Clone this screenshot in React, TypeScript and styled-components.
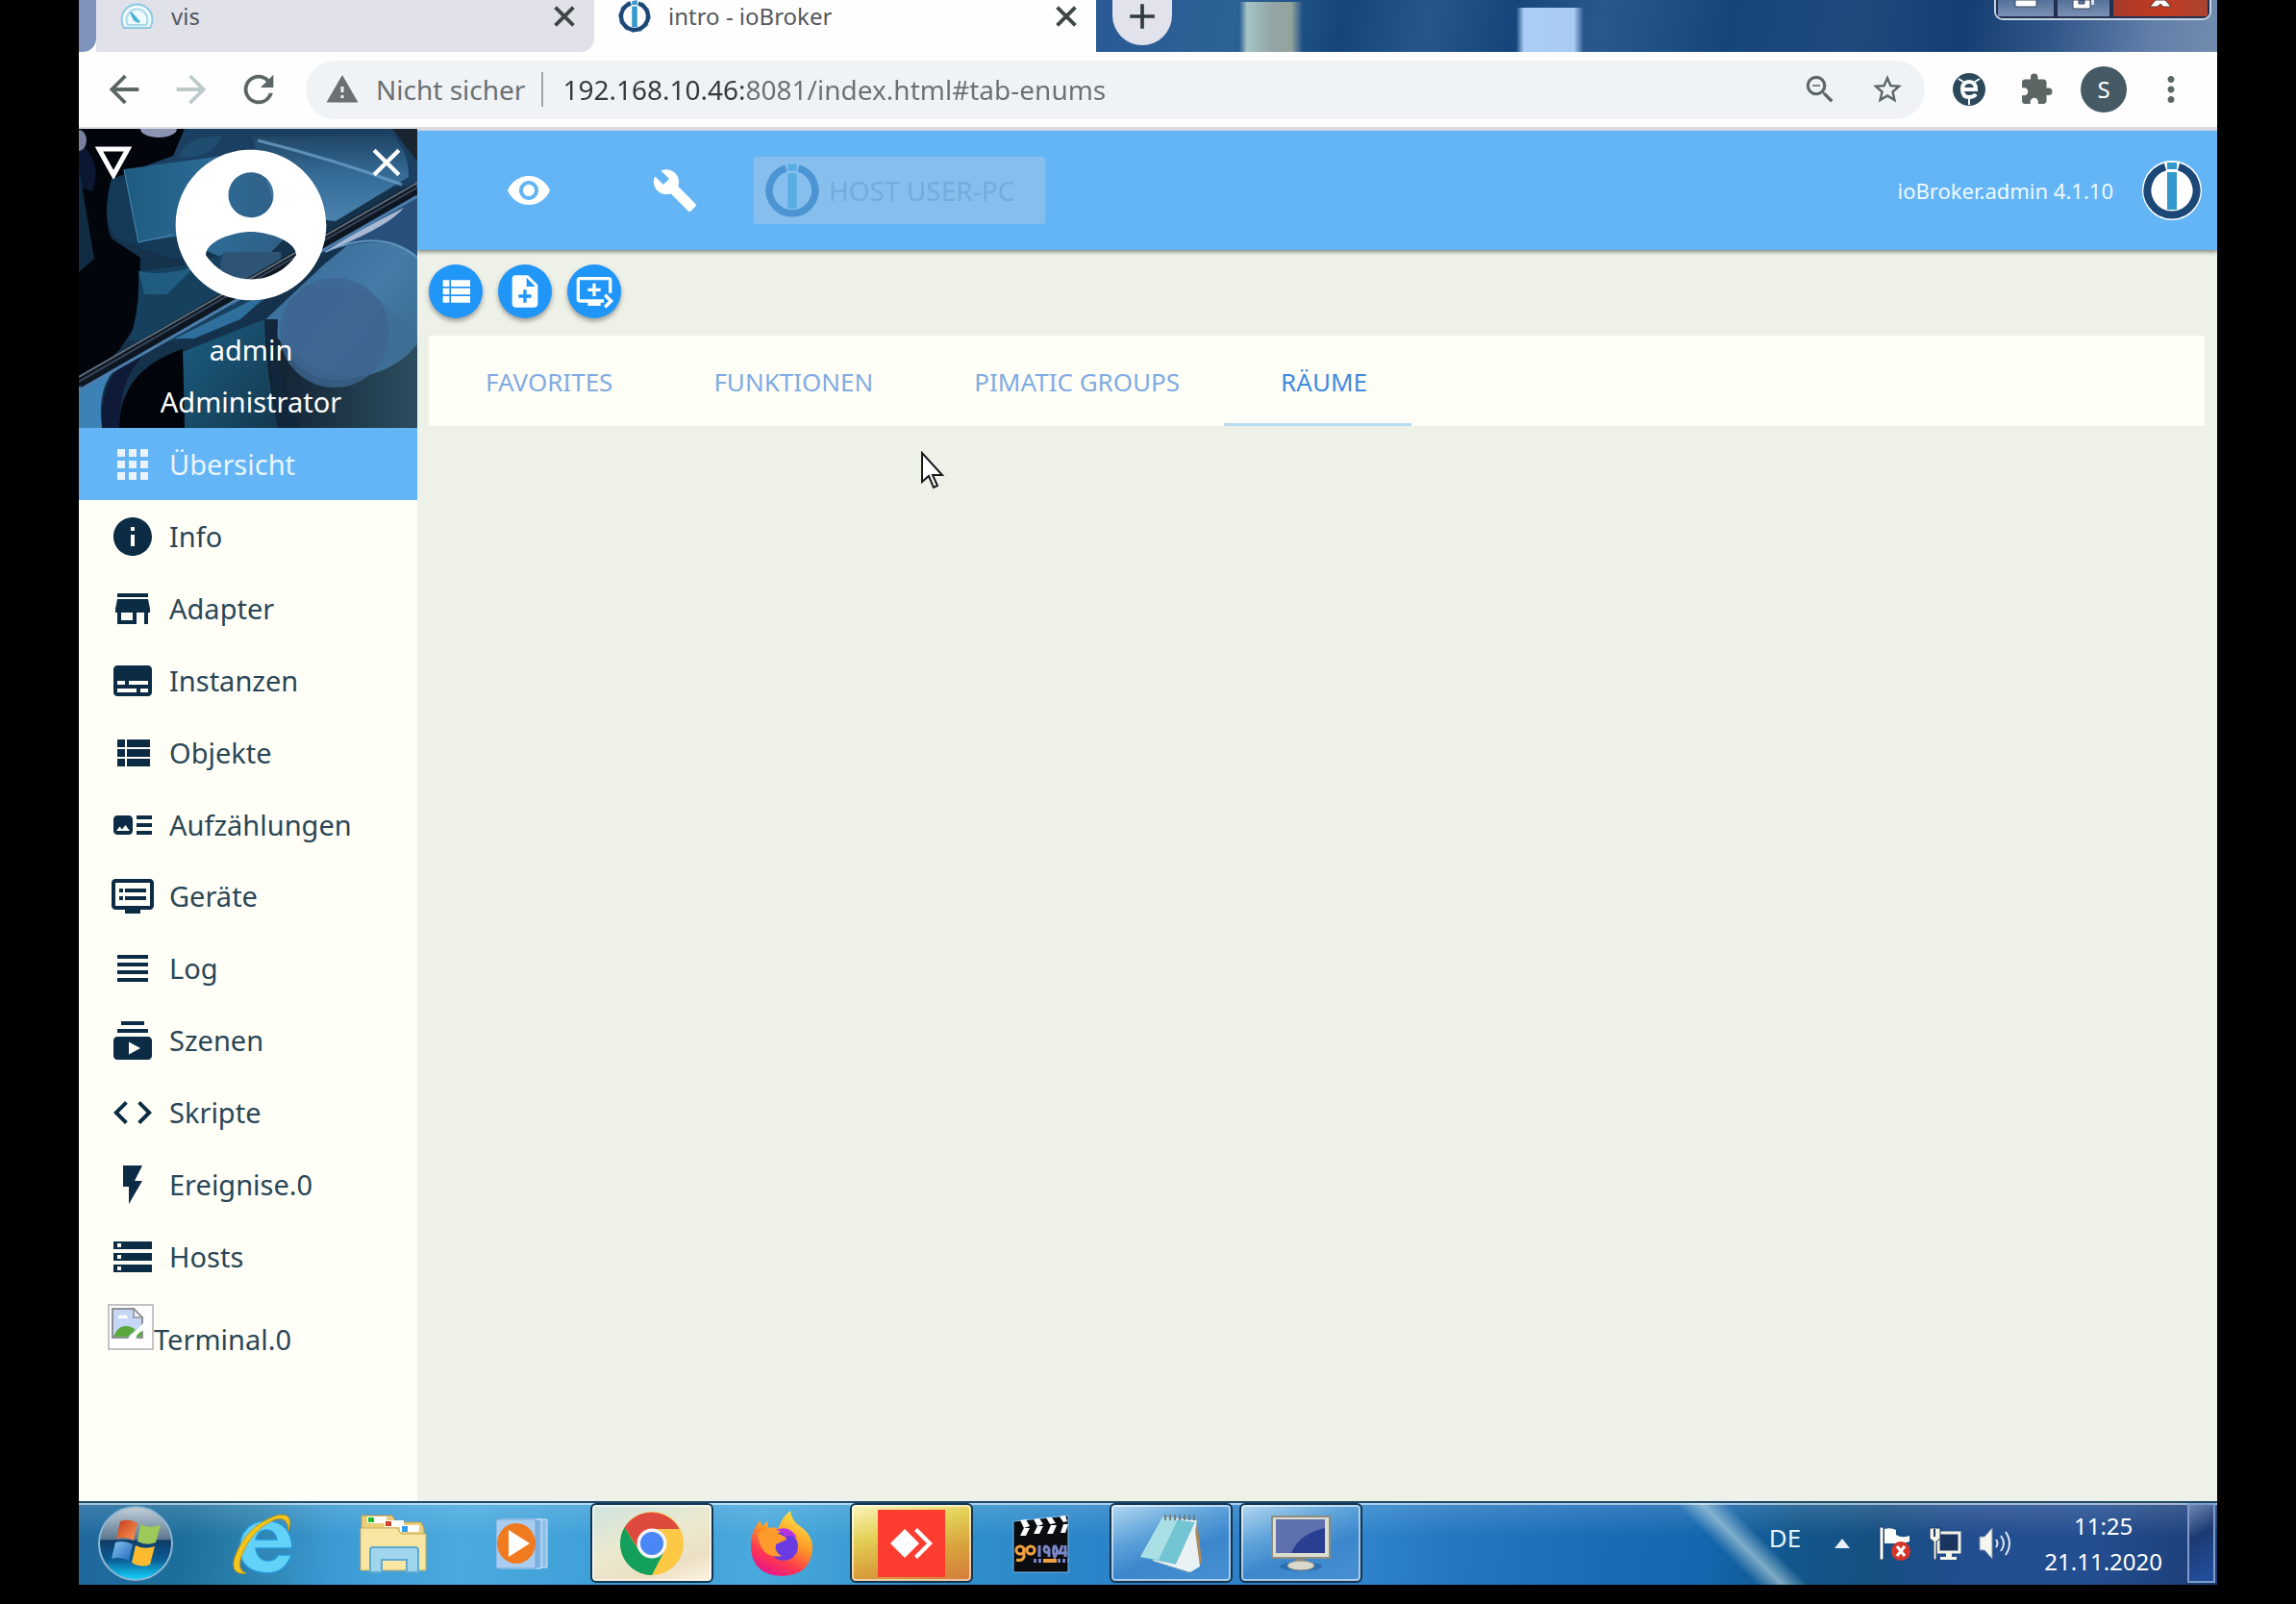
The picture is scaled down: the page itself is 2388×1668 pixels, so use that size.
import React from "react";
import styled, { createGlobalStyle } from "styled-components";
import {
  MdAdd,
  MdApps,
  MdArrowBack,
  MdArrowForward,
  MdArtTrack,
  MdBuild,
  MdCode,
  MdDvr,
  MdExtension,
  MdFlashOn,
  MdInfo,
  MdMoreVert,
  MdNoteAdd,
  MdQueuePlayNext,
  MdRefresh,
  MdStarBorder,
  MdStorage,
  MdSubscriptions,
  MdSubtitles,
  MdViewHeadline,
  MdVisibility,
  MdWarning,
  MdZoomOut,
} from "react-icons/md";

const GlobalStyle = createGlobalStyle`
  * { box-sizing: border-box; }
  body {
    margin: 0;
    background: #000;
    font-family: "Noto Sans", "Open Sans", sans-serif;
  }
  button, input { font: inherit; }
  button {
    margin: 0;
    padding: 0;
    border: 0;
    background: none;
    color: inherit;
    cursor: pointer;
  }
  svg { display: block; flex: none; }
`;

/* ---------- frame ---------- */

const Frame = styled.div`
  display: flex;
  flex-direction: column;
  min-height: 100vh;
  padding: 0 82px 20px;
  background: #000;
`;

const Row = styled.div<{ $gap?: number }>`
  display: flex;
  align-items: center;
  gap: ${(p) => p.$gap ?? 0}px;
`;

const Spacer = styled.div`
  flex: 1;
`;

/* ---------- browser chrome ---------- */

const TabStrip = styled.div`
  display: flex;
  height: 54px;
  overflow: hidden;
  background:
    linear-gradient(90deg, transparent, #a5c4c4 8px, #94a4a4 34px, #93a39c 54px, transparent) 1207px 2px / 66px 52px no-repeat,
    linear-gradient(90deg, transparent, #a9cdf6 8px, #a9cbf3 60px, transparent) 1495px 8px / 70px 46px no-repeat,
    linear-gradient(100deg, #7d93bd 0, #7d93bd 2%, #2a5798 45%, #2c6294 54%, #16457c 59%, #27568c 63%, #16457c 67%,
      #2a588e 71%, #16457c 77%, #1f4a7c 83%, #153e72 88%, #2f5688 92%, #6380aa 97%, #718cad 100%);
`;

const StripEdge = styled.div`
  width: 18px;
  background: #7d93bd;
  border-radius: 0 0 14px 0;
`;

const BrowserTab = styled.div<{ $active?: boolean; $width: number }>`
  display: flex;
  align-items: flex-start;
  gap: 18px;
  width: ${(p) => p.$width}px;
  padding: 0 20px 0 25px;
  border-radius: ${(p) => (p.$active ? "0" : "0 0 14px 0")};
  background: ${(p) => (p.$active ? "#fefefe" : "#e1e1ea")};
  color: #55585c;
  font-size: 24px;
  line-height: 34px;
`;

const TabBacking = styled.div`
  display: flex;
  background: #fefefe;
`;

const TabTitle = styled.span`
  flex: 1;
`;

const TabClose = styled.button`
  height: 34px;
  color: #3f4648;
  display: flex;
  align-items: center;
`;

const TabStripRest = styled.div`
  display: flex;
  align-items: flex-start;
  justify-content: space-between;
  flex: 1;
  padding: 0 6px 0 17px;
`;

const NewTab = styled.button`
  display: flex;
  align-items: flex-end;
  justify-content: center;
  width: 62px;
  height: 47px;
  padding-bottom: 8px;
  border-radius: 0 0 31px 31px;
  background: #e2e2ec;
  color: #2f3b3c;
`;

const WindowButtons = styled.div`
  display: flex;
  height: 21px;
  border: 2px solid #c9d4e6;
  border-top: 0;
  border-radius: 0 0 9px 9px;
  overflow: hidden;
`;

const WindowButton = styled.button<{ $width: number; $close?: boolean }>`
  display: flex;
  justify-content: center;
  width: ${(p) => p.$width}px;
  border: 2px solid #20304e;
  border-top: 0;
  background: ${(p) =>
    p.$close ? "linear-gradient(90deg, #a53a2c, #c33a20 50%, #a94430)" : "linear-gradient(#54719a, #7b90b3)"};
`;

const Toolbar = styled.div`
  display: flex;
  align-items: center;
  height: 80px;
  padding: 0 24px 0 23px;
  border-bottom: 2px solid #dcdfe6;
  background: #fefefe;
  color: #5c6366;
`;

const ToolButton = styled.button<{ $muted?: boolean }>`
  display: flex;
  align-items: center;
  justify-content: center;
  width: 48px;
  height: 48px;
  color: ${(p) => (p.$muted ? "#bccaca" : "#5c6664")};
`;

const AddressBar = styled.div`
  display: flex;
  align-items: center;
  flex: 1;
  height: 61px;
  margin: 0 22px 0 25px;
  padding: 0 15px 0 20px;
  border-radius: 31px;
  background: #eff3f5;
  font-size: 28px;
  line-height: 40px;
`;

const Insecure = styled.label`
  display: flex;
  align-items: center;
  gap: 17px;
  padding-right: 17px;
  border-right: 2px solid #9fa5a8;
  line-height: 34px;
  color: #6b7073;
  white-space: nowrap;
`;

const AddressInput = styled.input`
  flex: 1;
  min-width: 0;
  height: 40px;
  margin-left: 20px;
  padding: 0;
  border: 0;
  outline: 0;
  color: #6b7073;
  background: linear-gradient(90deg, #36393c 190px, #6b7073 190px);
  background-clip: text;
  -webkit-background-clip: text;
  -webkit-text-fill-color: transparent;
`;

const Profile = styled.button`
  width: 48px;
  height: 48px;
  border-radius: 50%;
  background: #455a64;
  color: #fff;
  font-size: 24px;
  line-height: 48px;
`;

/* ---------- application ---------- */

const AppBody = styled.div`
  display: flex;
  flex: 1;
`;

const Sidebar = styled.aside`
  width: 352px;
  background: #fffff8;
`;

const Cover = styled.div`
  position: relative;
  display: flex;
  flex-direction: column;
  align-items: center;
  padding: 6px 0 0 6px;
  overflow: hidden;
  background: #0a1e32;
  color: #fff;
  font-size: 29px;
  line-height: 54px;
`;

const CoverArt = styled.svg`
  position: absolute;
  inset: 0;
  width: 100%;
  height: 100%;
`;

const Avatar = styled.svg`
  position: relative;
  width: 188px;
  height: 188px;
  margin-bottom: 9px;
`;

const CoverLine = styled.div`
  position: relative;
`;

const CoverButton = styled.button<{ $side: "left" | "right" }>`
  position: absolute;
  top: 11px;
  ${(p) => p.$side}: ${(p) => (p.$side === "left" ? 12 : 8)}px;
  width: 48px;
  height: 48px;
  display: flex;
  align-items: center;
  justify-content: center;
`;

const NavList = styled.ul`
  display: flex;
  flex-direction: column;
  height: 899px;
  margin: 0;
  padding: 0;
  list-style: none;
`;

const NavItem = styled.li`
  display: flex;
  flex: 1;
`;

const NavLink = styled.a<{ $active?: boolean }>`
  display: flex;
  align-items: center;
  gap: 14px;
  flex: 1;
  padding: 1px 32px 0;
  background: ${(p) => (p.$active ? "#64b5f6" : "none")};
  color: ${(p) => (p.$active ? "#e9f5fe" : "#2a4656")};
  font-size: 29px;
  line-height: 40px;
  text-decoration: none;

  svg {
    color: ${(p) => (p.$active ? "#e9f2fd" : "#0b2c44")};
  }
`;

const ImageLink = styled.a`
  display: flex;
  align-items: baseline;
  padding: 12px 30px;
  color: #2a4656;
  font-size: 29px;
  line-height: 40px;
  text-decoration: none;
`;

const Main = styled.main`
  flex: 1;
  min-width: 0;
  border-top: 2px solid #dcdfe6;
  background: #eef1e8;
`;

const Header = styled.header`
  display: flex;
  align-items: center;
  height: 124px;
  padding: 0 16px 0 92px;
  background: #64b5f6;
  box-shadow: 0 2px 4px rgba(0, 0, 0, 0.45);
  color: #fff;
`;

const HeaderButton = styled.button`
  width: 48px;
  height: 48px;
`;

const HostButton = styled.button`
  display: flex;
  align-items: center;
  gap: 9px;
  height: 70px;
  margin-left: 58px;
  padding: 0 32px 0 11px;
  border-radius: 3px;
  background: #86bfee;
  color: #74acdb;
  font-size: 28px;
  line-height: 40px;
`;

const Version = styled.span`
  color: #eefaff;
  font-size: 22px;
  line-height: 34px;
`;

const Content = styled.div`
  padding: 15px 13px 0 12px;
`;

const RoundButton = styled.button`
  display: flex;
  align-items: center;
  justify-content: center;
  width: 56px;
  height: 56px;
  border-radius: 50%;
  background: #2196f9;
  box-shadow: 0 3px 5px rgba(0, 0, 0, 0.35);
  color: #fff;
`;

const TabPanel = styled.div`
  display: flex;
  height: 94px;
  margin-top: 18px;
  background: #fffff8;
`;

const EnumTab = styled.button<{ $active?: boolean }>`
  padding: 4px 46px 0 59px;
  border-bottom: 3px solid ${(p) => (p.$active ? "#b5dcf0" : "transparent")};
  color: ${(p) => (p.$active ? "#3f8ae0" : "#7fabe2")};
  font-size: 26px;
  line-height: 40px;
`;

const Cursor = styled.svg`
  position: absolute;
  left: 957px;
  top: 469px;
`;

/* ---------- taskbar ---------- */

const Taskbar = styled.footer`
  display: flex;
  align-items: center;
  height: 87px;
  padding: 0 2px 2px 19px;
  border-top: 2px solid #1d4a68;
  box-shadow: inset 0 2px 0 rgba(255, 255, 255, 0.55);
  background:
    linear-gradient(45deg, transparent 38%, rgba(170, 205, 220, 0.7) 50%, transparent 62%) right 424px top 0 / 140px
      86px no-repeat,
    linear-gradient(rgba(255, 255, 255, 0.14), transparent 40%),
    linear-gradient(95deg, #20689f 0, #1d6f9b 5%, #2c80ac 8%, #3b9ad4 12%, #4aaade 18%, #3c9dd6 26%, #4aa9dd 32%,
      #2f92cb 40%, #2a80c8 50%, #2f84cc 60%, #2577c0 64%, #1a6cb6 71%, #1466ae 76%, #11578c 80%, #164f82 84%,
      #224d8f 88%, #234e90 94%, #1b3d76 100%);
  color: #fff;
`;

const StartButton = styled.button`
  width: 80px;
  height: 80px;
  margin-right: 28px;
`;

const TaskButton = styled.button<{ $look?: "open" | "front" | "alert" }>`
  display: flex;
  align-items: center;
  justify-content: center;
  width: 128px;
  height: 83px;
  border: ${(p) => (p.$look ? "2px solid #12344f" : "0")};
  border-radius: 6px;
  box-shadow: ${(p) => (p.$look ? "inset 0 0 0 2px rgba(255, 255, 255, 0.55)" : "none")};
  background: ${(p) =>
    p.$look === "front"
      ? "linear-gradient(160deg, #cfe3e0, #ebe9cf 45%, #ece0c4 75%, #fdf4e4)"
      : p.$look === "alert"
        ? "linear-gradient(165deg, #fdf6c0, #e3d057 35%, #d9a23c 65%, #d47a3c)"
        : p.$look === "open"
          ? "linear-gradient(160deg, #b4d8f0, #5fa3da 35%, #3c87cc 60%, #4790d2)"
          : "none"};
`;

const Language = styled.button`
  color: #e4f1fa;
  font-size: 26px;
  line-height: 34px;
  padding-bottom: 12px;
`;

const Tray = styled.div`
  display: flex;
  align-items: center;
  gap: 18px;
  margin: 0 34px 0 30px;
`;

const Clock = styled.button`
  margin-right: 26px;
  font-size: 24px;
  line-height: 37px;
  text-align: center;
`;

const ShowDesktop = styled.button`
  width: 29px;
  height: 83px;
  border: 2px solid #7f9cc8;
  background: linear-gradient(150deg, #6f86b4, #1b3a72 40%, #2350a0);
`;

/* ---------- drawings ---------- */

function BrokerLogo({
  size,
  disc,
  teeth,
  ring = "#1c4877",
  bar = "#3399cc",
}: {
  size: number;
  disc?: string;
  teeth?: boolean;
  ring?: string;
  bar?: string;
}) {
  return (
    <svg width={size} height={size} viewBox="0 0 62 62" aria-hidden="true">
      {teeth && <circle cx="31" cy="31" r="29" fill="none" stroke="#8fa9c6" strokeWidth="4" strokeDasharray="6 9" />}
      {disc && <circle cx="31" cy="31" r="31" fill={disc} />}
      <path d="M24 6.500A25.500 25.500 0 1 0 38 6.500" fill="none" stroke={ring} strokeWidth="8" />
      <path d="M26 2h10v7H26zM26 12h10v39H26z" fill={bar} />
    </svg>
  );
}

function CloseIcon({ size, weight }: { size: number; weight: number }) {
  return (
    <svg width={size} height={size} viewBox="0 0 28 28" aria-hidden="true">
      <path d="M2 2l24 24M26 2L2 26" fill="none" stroke="currentColor" strokeWidth={weight} />
    </svg>
  );
}

function GaugeIcon() {
  return (
    <svg width="35" height="32" viewBox="0 0 35 32" aria-hidden="true">
      <path d="M4 29a16 16 0 1 1 27 0z" fill="#eef9fb" stroke="#8cc9e2" strokeWidth="2" />
      <path d="M8 26a11 11 0 1 1 19 0z" fill="none" stroke="#a8d8e8" strokeWidth="2" />
      <path d="M11 13l9 10-5-2z" fill="#4eb0dc" stroke="#4eb0dc" strokeWidth="2" />
    </svg>
  );
}

function StoreIcon({ size }: { size: number }) {
  return (
    <svg width={size} height={size} viewBox="0 0 24 24" fill="currentColor" aria-hidden="true">
      <path d="M20 4H4v2h16V4zm1 10v-2l-1-5H4l-1 5v2h1v6h10v-6h4v6h2v-6h1zm-9 4H6v-4h6v4z" />
    </svg>
  );
}

function ListIcon({ size }: { size: number }) {
  return (
    <svg width={size} height={size} viewBox="0 0 24 24" fill="currentColor" aria-hidden="true">
      <path d="M4 14h4v-4H4v4zm0 5h4v-4H4v4zM4 9h4V5H4v4zm5 5h12v-4H9v4zm0 5h12v-4H9v4zM9 5v4h12V5H9z" />
    </svg>
  );
}

function CoverDrawing() {
  return (
    <CoverArt viewBox="0 0 352 311" preserveAspectRatio="none" aria-hidden="true">
      <defs>
        <linearGradient id="pane" x1="0" y1="0" x2="1" y2="0">
          <stop offset="0" stopColor="#1f5b80" />
          <stop offset="0.5" stopColor="#2d6b96" />
          <stop offset="1" stopColor="#345a7e" />
        </linearGradient>
        <linearGradient id="sweep" x1="0" y1="0" x2="0" y2="1">
          <stop offset="0" stopColor="#1f4565" />
          <stop offset="0.5" stopColor="#376e99" />
          <stop offset="1" stopColor="#4a82ad" />
        </linearGradient>
        <linearGradient id="disc" x1="0" y1="0" x2="1" y2="1">
          <stop offset="0" stopColor="#2c5f8c" />
          <stop offset="0.6" stopColor="#457ba6" />
          <stop offset="1" stopColor="#35627f" />
        </linearGradient>
        <linearGradient id="deep" x1="0" y1="0" x2="1" y2="0">
          <stop offset="0" stopColor="#111f30" />
          <stop offset="1" stopColor="#2b4e5f" />
        </linearGradient>
        <linearGradient id="teal" x1="0" y1="0" x2="1" y2="1">
          <stop offset="0" stopColor="#1c5d82" />
          <stop offset="1" stopColor="#14394f" />
        </linearGradient>
      </defs>
      <rect width="352" height="311" fill="#15324c" />
      <path d="M60 0h292v60H60z" fill="#1b3f60" />
      <path d="M0 0h110L98 28 60 42 34 52q-10 40 0 62l30 20-2 66-20 30-42 38z" fill="#02060c" />
      <path d="M0 15c16 10 22 30 14 50L0 60z" fill="#0c1733" />
      <path d="M0 40l16 95-16 14z" fill="#102c42" />
      <ellipse cx="83" cy="0" rx="19" ry="9" fill="#8c94b4" />
      <ellipse cx="0" cy="12" rx="8" ry="11" fill="#77809f" />
      <path d="M103 30q10-24 45-22-6 22-45 22z" fill="#1f4d70" />
      <path d="M34 52q-12 45 6 62l60 22 60-20V40z" fill="#153a58" />
      <path d="M47 42L150 28h70l20 60-60 60-80-36-38 6z" fill="url(#pane)" />
      <path d="M47 42l15 76 36-8" stroke="#4b89b3" fill="none" />
      <path d="M62 148q50-4 90-18l60 0-20 50-90 40H52q12-30 10-72z" fill="#15415e" />
      <path d="M62 148q30 6 60-6l-30 30-24 0z" fill="#205c7f" />
      <path d="M150 128h60v20l-50 36q-20-26-10-56z" fill="#2d5375" />
      <path d="M180 8L325 6q18 16 18 44l-76 46-60-6z" fill="url(#sweep)" />
      <path d="M186 12q80 20 150 46" stroke="#6b9dc4" strokeWidth="3" fill="none" opacity="0.8" />
      <path d="M352 62v249H150l20-90 85-80z" fill="url(#disc)" />
      <path d="M352 62v70q-30-26-96-4z" fill="#28507a" />
      <path d="M256 128q60-26 96 6" stroke="#6296bf" strokeWidth="2" fill="none" />
      <path d="M190 196q40 60 100 62 40-6 62-34v87H190z" fill="url(#deep)" />
      <path d="M222 240q-24-50 16-76 70-12 114 54-30 36-80 44-34-2-50-22z" fill="#3f6d96" opacity="0.7" />
      <circle cx="266" cy="212" r="57" fill="#3d6590" opacity="0.8" />
      <path d="M108 232l85-34q2 60 14 113H110z" fill="url(#teal)" />
      <path d="M193 198h14q-4 60 24 113h-24z" fill="#12263c" />
      <path d="M42 311q0-60 66-82l2 82z" fill="#01040a" />
      <path d="M0 268l42-22q-24 20-18 65H0z" fill="#3d82b6" />
      <path d="M24 311q-2-48 22-66l20-8q-24 24-24 74z" fill="#0e1a38" />
      <path d="M100 218q60-30 104-52l-36 32-48 20z" fill="#2f6f9c" />
      <path d="M0 265Q180 160 352 62" stroke="#0d1722" strokeWidth="14" fill="none" />
      <path d="M0 258Q180 154 352 56" stroke="#5b6b7a" strokeWidth="2" fill="none" />
      <path d="M0 263Q180 158 352 61" stroke="#39465a" strokeWidth="2" fill="none" />
      <path d="M0 272Q180 168 352 70" stroke="#4d7dab" strokeWidth="3" fill="none" />
      <path d="M256 128q30-20 82-46-16 20-82 46z" fill="#a9b9d4" />
      <path d="M326 0h26v34z" fill="#182430" />
    </CoverArt>
  );
}

function BrokenImage() {
  return (
    <svg width="48" height="48" viewBox="0 0 48 48" role="img" aria-label="Terminal">
      <rect x="1" y="1" width="46" height="46" fill="#fefefe" stroke="#c4c4c4" strokeWidth="2" />
      <path d="M5 5h22l9 9v21H5z" fill="#c6d7f5" stroke="#8e9297" strokeWidth="2" />
      <path d="M27 5v9h9z" fill="#eceff3" stroke="#8e9297" strokeWidth="1.5" />
      <path d="M10 15q2-5 6-3 4-2 5 3z" fill="#fff" />
      <path d="M6 34q5-12 13-11 6 0 10 4l-8 7z" fill="#58a83e" />
      <path d="M21 36L39 18v7L29 36z" fill="#fff" />
      <path d="M29 34l6-6v6z" fill="#58a83e" />
    </svg>
  );
}

function StartOrb() {
  return (
    <svg width="80" height="80" viewBox="0 0 80 80" aria-hidden="true">
      <defs>
        <linearGradient id="orb" x1="0" y1="0" x2="0" y2="1">
          <stop offset="0" stopColor="#c4d0da" />
          <stop offset="0.44" stopColor="#5b7890" />
          <stop offset="0.46" stopColor="#0f3c66" />
          <stop offset="0.72" stopColor="#0b5a94" />
          <stop offset="1" stopColor="#12d8ff" />
        </linearGradient>
        <linearGradient id="red" x1="0" y1="0" x2="1" y2="1">
          <stop offset="0" stopColor="#c93a1c" />
          <stop offset="1" stopColor="#f79a54" />
        </linearGradient>
        <linearGradient id="blue" x1="0" y1="0" x2="1" y2="1">
          <stop offset="0" stopColor="#8cc6f4" />
          <stop offset="1" stopColor="#1a66b8" />
        </linearGradient>
      </defs>
      <circle cx="40" cy="40" r="38" fill="url(#orb)" stroke="#8fb6d2" strokeWidth="2" />
      <path d="M24 17q9-4 18 2l-4 18q-9-5-18-2z" fill="url(#red)" />
      <path d="M45 20q9 5 21 1l-5 18q-9 4-19-1z" fill="#9cc957" />
      <path d="M19 39q9-3 18 2l-4 17q-9-5-18-2z" fill="url(#blue)" />
      <path d="M40 42q9 5 20 1l-5 19q-9 4-19-2z" fill="#fcbb2f" />
    </svg>
  );
}

function ExplorerE() {
  return (
    <svg width="66" height="66" viewBox="0 0 66 66" aria-hidden="true">
      <path
        d="M64 38H26q2 13 13 13 8 0 10-6h14q-6 19-26 19Q9 62 9 37 11 11 37 9q26 1 27 29zM26 29h22q-2-10-11-10-9 0-11 10z"
        fill="#62d2f8"
        stroke="#2796d8"
        strokeWidth="1.5"
      />
      <path d="M60 20q6-20-12-16Q16 14 4 48q-5 18 12 16-10-3-5-18Q22 18 46 8q14-4 14 12z" fill="#f3c61c" stroke="#c99612" />
    </svg>
  );
}

function FolderIcon() {
  return (
    <svg width="72" height="66" viewBox="0 0 72 66" aria-hidden="true">
      <path d="M4 60V4h32l4 7h26l3 6v43z" fill="#e9cf7c" stroke="#b99a4c" />
      <path d="M10 5h20v7H10z" fill="#fff" />
      <path d="M11 6h6v5h-6z" fill="#1fbf2e" />
      <path d="M28 9h20v7H28z" fill="#fff" />
      <path d="M29 10h6v5h-6z" fill="#d43c2a" />
      <path d="M3 61V17h38l4 6h26v38z" fill="#f8e6a2" stroke="#c9ad60" />
      <path d="M44 14h20v7H44z" fill="#fff" />
      <path d="M46 15h6v6h-6z" fill="#2f9cf0" />
      <path d="M13 63V40q0-3 3-3h44q3 0 3 3v23H51V50H25v13z" fill="#9fd6ee" stroke="#5fabd0" strokeWidth="2" />
    </svg>
  );
}

function MediaIcon() {
  return (
    <svg width="58" height="54" viewBox="0 0 58 54" aria-hidden="true">
      <path d="M10 2h45v50H10z" fill="#8fc0ea" stroke="#cfe6f8" />
      <path d="M6 2h43v51H6z" fill="#7bb0e0" stroke="#dceefa" />
      <path d="M2 2h41v51H2z" fill="#a9cdf0" stroke="#6fa4d8" />
      <ellipse cx="23" cy="27" rx="20" ry="21" fill="#f07a1e" />
      <path d="M15 13l22 14-22 14z" fill="#fff" />
    </svg>
  );
}

function ChromeIcon() {
  return (
    <svg width="66" height="66" viewBox="0 0 66 66" aria-hidden="true">
      <circle cx="33" cy="33" r="33" fill="#fdc843" />
      <path d="M4.400 16.500A33 33 0 0 1 61.600 18L33 18 20 40z" fill="#de4a3e" />
      <path d="M4.400 16.500A33 33 0 0 0 33 66L46 41 33 48 20 41z" fill="#12a05c" />
      <circle cx="33" cy="33" r="15.500" fill="#f2f4f7" />
      <circle cx="33" cy="33" r="12" fill="#4a86f5" />
    </svg>
  );
}

function FirefoxIcon() {
  return (
    <svg width="68" height="70" viewBox="0 0 68 70" aria-hidden="true">
      <defs>
        <linearGradient id="fox" x1="0.8" y1="0" x2="0.3" y2="1">
          <stop offset="0" stopColor="#fff24a" />
          <stop offset="0.45" stopColor="#ff9526" />
          <stop offset="0.75" stopColor="#ff3750" />
          <stop offset="1" stopColor="#e5158a" />
        </linearGradient>
      </defs>
      <path
        d="M8 16l3-5 3 6 5-5 1 7q6-2 10 1Q34 8 43 1q1 10 10 16 14 10 13 24-2 27-32 28Q4 68 2 40 1 26 8 16z"
        fill="url(#fox)"
      />
      <circle cx="36" cy="38" r="15" fill="#6a3be0" />
      <path d="M9 25q10-8 22 0 8 3 8 6l-11 5q-2 8 6 12Q12 52 9 25z" fill="#ff9a2c" />
      <path d="M28 21q14-6 22 8-8-4-12 0-2-6-10-8z" fill="#b833e1" />
    </svg>
  );
}

function AnyDeskIcon() {
  return (
    <svg width="70" height="70" viewBox="0 0 70 70" aria-hidden="true">
      <path d="M0 0h70v70H0z" fill="#fe3d31" />
      <path d="M28 20l15 15-15 15-15-15z" fill="#fff" />
      <path d="M38 22l3-3 16 16-16 16-3-3 13-13z" fill="#fff" />
    </svg>
  );
}

function ClapperIcon() {
  return (
    <svg width="60" height="62" viewBox="0 0 60 62" aria-hidden="true">
      <path d="M1 8l57-6v59H1z" fill="#0a0c10" stroke="#7db8e8" />
      <path d="M8 7l6-1 4 7-6 2zM22 6l6-1 4 6-6 2zM35 4l6 0 4 6-6 1zM49 3l6-1 2 6-4 1z" fill="#fff" />
      <path d="M12 15h6l-4 8H8zM26 13h6l-4 8h-6zM40 12h6l-4 9h-6zM53 11h5l-3 9h-5z" fill="#fff" />
      <g fill="none" strokeWidth="3">
        <circle cx="8" cy="38" r="4" stroke="#f0a040" />
        <path d="M12 35v10q-2 5-8 3" stroke="#f0a040" />
        <circle cx="19" cy="38" r="4" stroke="#f0a040" />
        <path d="M28 33v12M38 45v-8q-4-6-5 0 0 4 4 3M44 33q-3 5 0 12 5-6 0-12M52 33l-3 8h8M55 33v12" stroke="#7a86c8" />
      </g>
      <path d="M22 49h36" stroke="#7a86c8" strokeWidth="4" strokeDasharray="3 2" />
      <path d="M32 49h14" stroke="#f0a040" strokeWidth="4" />
    </svg>
  );
}

function NotepadIcon() {
  return (
    <svg width="66" height="64" viewBox="0 0 66 64" aria-hidden="true">
      <path d="M60 8l5 44-14 10z" fill="#b08a58" />
      <path d="M24 4l36 4-8 54L14 50z" fill="#f3f7f8" stroke="#9bb4bd" />
      <path d="M24 5l34 5-20 44L1 46z" fill="#73c4d2" />
      <path d="M24 5l16 2-20 42L1 46z" fill="#aadfe6" />
      <path d="M57 12l6 44-10 6-15-8z" fill="#e9f1f2" />
      <path d="M26 5h34" stroke="#6f7f86" strokeWidth="6" strokeDasharray="2 3" />
    </svg>
  );
}

function MonitorIcon() {
  return (
    <svg width="64" height="60" viewBox="0 0 64 60" aria-hidden="true">
      <ellipse cx="32" cy="54" rx="22" ry="5" fill="#1f5fa0" opacity="0.6" />
      <path d="M2 2h60v43H2z" fill="#dcdccf" stroke="#8d8d82" strokeWidth="2" />
      <path d="M6 5h51v35H6z" fill="#2a3f92" />
      <path d="M6 5h51v9Q30 20 22 40H6z" fill="#5f70ae" />
      <path d="M27 45h10v6H27z" fill="#87877c" />
      <ellipse cx="32" cy="53" rx="14" ry="5" fill="#d8d8cc" stroke="#8d8d82" />
    </svg>
  );
}

function FlagIcon() {
  return (
    <svg width="34" height="36" viewBox="0 0 34 36" aria-hidden="true">
      <path d="M1 1h4v34H1z" fill="#fff" stroke="#1c3560" />
      <path d="M6 3q6-2 12 1v5q6 4 14 1v6q-8 3-14 2H6z" fill="#fff" />
      <circle cx="23" cy="26" r="10" fill="#d6352b" />
      <path d="M19 21l8 10M27 21l-8 10" stroke="#fff" strokeWidth="3" />
    </svg>
  );
}

function NetworkIcon() {
  return (
    <svg width="34" height="36" viewBox="0 0 34 36" aria-hidden="true">
      <path d="M10 7h22v20H10z" fill="#1c3560" stroke="#f3f3e6" strokeWidth="3" />
      <path d="M18 28h6v4h5v3H12v-3h6z" fill="#f3f3e6" />
      <path d="M1 2h11v11l-4 3v19H5V16l-4-3z" fill="#f3f3e6" stroke="#1c3560" />
      <path d="M6 3v8" stroke="#1c3560" strokeWidth="2" />
    </svg>
  );
}

function SpeakerIcon() {
  return (
    <svg width="34" height="36" viewBox="0 0 34 36" aria-hidden="true">
      <path d="M1 11h5L14 2v32L6 25H1z" fill="#f7f7f2" stroke="#7d8ba8" />
      <path d="M18 14q3 4 0 8M23 10q6 8 0 16M28 6q8 12 0 24" fill="none" stroke="#dfe8f4" strokeWidth="2" />
    </svg>
  );
}

const navItems = [
  { label: "Übersicht", href: "#tab-overview", icon: MdApps, active: true },
  { label: "Info", href: "#tab-intro", icon: MdInfo },
  { label: "Adapter", href: "#tab-adapters", icon: StoreIcon },
  { label: "Instanzen", href: "#tab-instances", icon: MdSubtitles },
  { label: "Objekte", href: "#tab-objects", icon: ListIcon },
  { label: "Aufzählungen", href: "#tab-enums", icon: MdArtTrack },
  { label: "Geräte", href: "#tab-devices", icon: MdDvr },
  { label: "Log", href: "#tab-logs", icon: MdViewHeadline },
  { label: "Szenen", href: "#tab-scenes", icon: MdSubscriptions },
  { label: "Skripte", href: "#tab-javascript", icon: MdCode },
  { label: "Ereignise.0", href: "#tab-events", icon: MdFlashOn },
  { label: "Hosts", href: "#tab-hosts", icon: MdStorage },
];

const enumTabs = ["FAVORITES", "FUNKTIONEN", "PIMATIC GROUPS", "RÄUME"];

export default function App() {
  return (
    <Frame>
      <GlobalStyle />
      <TabStrip>
        <TabBacking>
          <StripEdge />
          <BrowserTab $width={518}>
            <GaugeIcon />
            <TabTitle>vis</TabTitle>
            <TabClose aria-label="Tab schließen">
              <CloseIcon size={22} weight={5} />
            </TabClose>
          </BrowserTab>
          <BrowserTab $active $width={522}>
            <BrokerLogo size={34} teeth />
            <TabTitle>intro - ioBroker</TabTitle>
            <TabClose aria-label="Tab schließen">
              <CloseIcon size={22} weight={5} />
            </TabClose>
          </BrowserTab>
        </TabBacking>
        <TabStripRest>
          <NewTab aria-label="Neuer Tab">
            <MdAdd size={44} />
          </NewTab>
          <WindowButtons>
            <WindowButton $width={62} aria-label="Minimieren">
              <svg width="24" height="8" viewBox="0 0 24 8">
                <path d="M1 0h22v7H1z" fill="#fff" stroke="#3c4a60" />
              </svg>
            </WindowButton>
            <WindowButton $width={58} aria-label="Verkleinern">
              <svg width="26" height="10" viewBox="0 0 26 10">
                <path d="M21 0v5h3V0z" fill="#dfe3ea" />
                <path d="M2 0h18v9H2zM8 0v4h6V0z" fill="#fff" stroke="#3c4a60" fillRule="evenodd" />
              </svg>
            </WindowButton>
            <WindowButton $width={102} $close aria-label="Schließen">
              <svg width="24" height="8" viewBox="0 0 24 8">
                <path d="M7 0h10l6 7h-8l-3-3-3 3H1z" fill="#fff" stroke="#5a3a3a" />
              </svg>
            </WindowButton>
          </WindowButtons>
        </TabStripRest>
      </TabStrip>

      <Toolbar>
        <Row $gap={22}>
          <ToolButton aria-label="Zurück">
            <MdArrowBack size={46} />
          </ToolButton>
          <ToolButton $muted aria-label="Vorwärts">
            <MdArrowForward size={46} />
          </ToolButton>
          <ToolButton aria-label="Neu laden">
            <MdRefresh size={46} />
          </ToolButton>
        </Row>
        <AddressBar>
          <Insecure htmlFor="address">
            <MdWarning size={36} />
            Nicht sicher
          </Insecure>
          <AddressInput id="address" type="text" defaultValue="192.168.10.46:8081/index.html#tab-enums" />
          <Row $gap={22}>
            <ToolButton aria-label="Zoom">
              <MdZoomOut size={38} />
            </ToolButton>
            <ToolButton aria-label="Lesezeichen">
              <MdStarBorder size={36} />
            </ToolButton>
          </Row>
        </AddressBar>
        <Row $gap={22}>
          <ToolButton aria-label="ecosia">
            <svg width="36" height="36" viewBox="0 0 36 36">
              <circle cx="18" cy="18" r="17" fill="#2d4a5d" />
              <path d="M7 7l5 3M29 7l-5 3M18 28v6" stroke="#fff" strokeWidth="2" />
              <path d="M11 18h14q0-8-7-8t-7 8 7 8q5 0 7-3" fill="none" stroke="#fff" strokeWidth="4" />
            </svg>
          </ToolButton>
          <ToolButton aria-label="Erweiterungen">
            <MdExtension size={36} />
          </ToolButton>
          <Profile aria-label="Profil">S</Profile>
          <ToolButton aria-label="Menü">
            <MdMoreVert size={42} />
          </ToolButton>
        </Row>
      </Toolbar>

      <AppBody>
        <Sidebar>
          <Cover>
            <CoverDrawing />
            <Avatar viewBox="0 0 24 24" aria-hidden="true">
              <path
                fill="#fff"
                d="M12 2C6.480 2 2 6.480 2 12s4.480 10 10 10 10-4.480 10-10S17.520 2 12 2zm0 3c1.660 0 3 1.340 3 3s-1.340 3-3 3-3-1.340-3-3 1.340-3 3-3zm0 14.200c-2.500 0-4.710-1.280-6-3.220.030-1.990 4-3.080 6-3.080 1.990 0 5.970 1.090 6 3.080-1.290 1.940-3.500 3.220-6 3.220z"
              />
            </Avatar>
            <CoverLine>admin</CoverLine>
            <CoverLine>Administrator</CoverLine>
            <CoverButton $side="left" aria-label="Menü">
              <svg width="38" height="34" viewBox="0 0 38 34">
                <path d="M4 3h30L19 30z" fill="none" stroke="#fff" strokeWidth="5" />
              </svg>
            </CoverButton>
            <CoverButton $side="right" aria-label="Menü schließen">
              <CloseIcon size={30} weight={4} />
            </CoverButton>
          </Cover>
          <nav>
            <NavList>
              {navItems.map(({ label, href, icon: Icon, active }) => (
                <NavItem key={label}>
                  <NavLink href={href} $active={active}>
                    <Icon size={48} />
                    {label}
                  </NavLink>
                </NavItem>
              ))}
            </NavList>
            <ImageLink href="#tab-terminal">
              <BrokenImage />
              Terminal.0
            </ImageLink>
          </nav>
        </Sidebar>

        <Main>
          <Header>
            <Row $gap={104}>
              <HeaderButton aria-label="Ansicht">
                <MdVisibility size={48} />
              </HeaderButton>
              <HeaderButton aria-label="Einstellungen">
                <MdBuild size={48} />
              </HeaderButton>
            </Row>
            <HostButton disabled>
              <BrokerLogo size={58} ring="#4c95d2" bar="#56aee4" />
              HOST USER-PC
            </HostButton>
            <Spacer />
            <Row $gap={30}>
              <Version>ioBroker.admin 4.1.10</Version>
              <BrokerLogo size={62} disc="#fff" />
            </Row>
          </Header>
          <Content>
            <Row $gap={16}>
              <RoundButton aria-label="Liste">
                <ListIcon size={40} />
              </RoundButton>
              <RoundButton aria-label="Aufzählung hinzufügen">
                <MdNoteAdd size={40} />
              </RoundButton>
              <RoundButton aria-label="Kategorie hinzufügen">
                <MdQueuePlayNext size={40} />
              </RoundButton>
            </Row>
            <TabPanel role="tablist">
              {enumTabs.map((name, i) => (
                <EnumTab key={name} role="tab" aria-selected={i === 3} $active={i === 3}>
                  {name}
                </EnumTab>
              ))}
            </TabPanel>
          </Content>
        </Main>
      </AppBody>

      <Taskbar>
        <StartButton aria-label="Start">
          <StartOrb />
        </StartButton>
        <Row $gap={7}>
          <TaskButton aria-label="Internet Explorer">
            <ExplorerE />
          </TaskButton>
          <TaskButton aria-label="Explorer">
            <FolderIcon />
          </TaskButton>
          <TaskButton aria-label="Media Player">
            <MediaIcon />
          </TaskButton>
          <TaskButton $look="front" aria-label="Chrome">
            <ChromeIcon />
          </TaskButton>
          <TaskButton aria-label="Firefox">
            <FirefoxIcon />
          </TaskButton>
          <TaskButton $look="alert" aria-label="AnyDesk">
            <AnyDeskIcon />
          </TaskButton>
          <TaskButton aria-label="Video">
            <ClapperIcon />
          </TaskButton>
          <TaskButton $look="open" aria-label="Editor">
            <NotepadIcon />
          </TaskButton>
          <TaskButton $look="open" aria-label="Computer">
            <MonitorIcon />
          </TaskButton>
        </Row>
        <Spacer />
        <Row $gap={35}>
          <Language>DE</Language>
          <svg width="16" height="10" viewBox="0 0 16 10" aria-hidden="true">
            <path d="M8 0l8 10H0z" fill="#e8edf8" />
          </svg>
        </Row>
        <Tray>
          <FlagIcon />
          <NetworkIcon />
          <SpeakerIcon />
        </Tray>
        <Clock>
          11:25
          <br />
          21.11.2020
        </Clock>
        <ShowDesktop aria-label="Desktop anzeigen" />
      </Taskbar>

      <Cursor width="26" height="40" viewBox="0 0 26 40" aria-hidden="true">
        <path d="M2 2v30l7-6 5 12 4-2-5-11h10z" fill="#fff" stroke="#1a1a1a" strokeWidth="2" />
      </Cursor>
    </Frame>
  );
}
